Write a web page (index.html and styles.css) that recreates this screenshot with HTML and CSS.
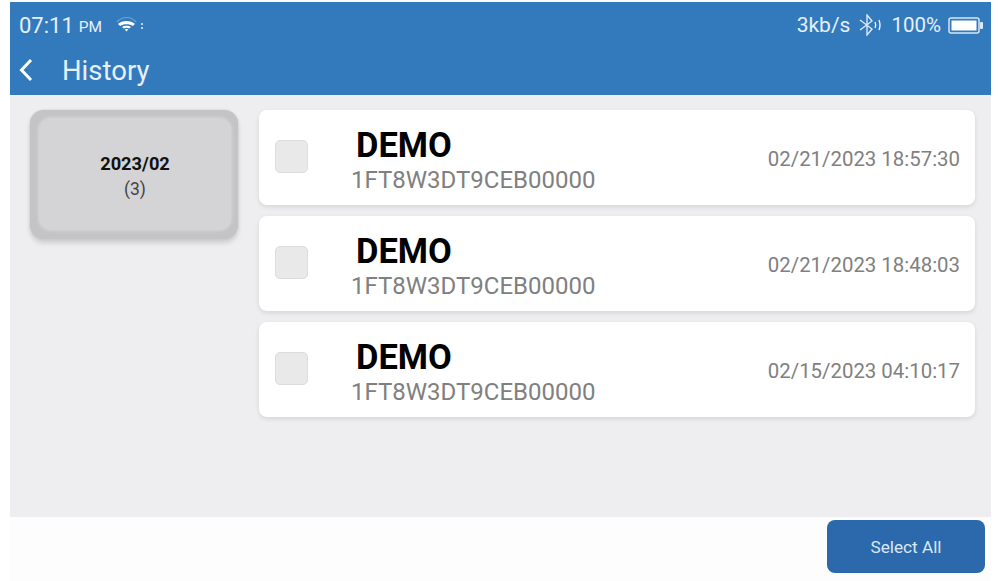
FILE: index.html
```html
<!DOCTYPE html>
<html>
<head>
  <meta name="viewport" content="width=device-width, initial-scale=1.0">
  <title>History</title>
  <link rel="stylesheet" href="styles.css">
</head>
<body>
  <div class="screen">
    <div class="header">
      <div class="status">
        <span class="time">07:11</span>
        <span class="ampm">PM</span>
        <svg class="wifi" width="28" height="18" viewBox="0 0 28 18">
          <path d="M1 6 C6 0 15 0 20 6" fill="none" stroke="#6fa3d6" stroke-width="1.2"/>
          <path d="M2 8 C6 4 15 4 19 8 L16.8 10 C13.8 7.6 7.2 7.6 4.2 10 Z" fill="#fff"/>
          <path d="M6 11 C8.4 9.4 12.6 9.4 15 11 L13.2 12.6 C11.6 11.6 9.4 11.6 7.8 12.6 Z" fill="#fff"/>
          <path d="M8.8 13.4 C9.8 12.8 11.2 12.8 12.2 13.4 L10.5 15.6 Z" fill="#fff"/>
          <circle cx="26" cy="8" r="1.1" fill="#d8e6f5"/>
          <circle cx="26" cy="12" r="1.1" fill="#d8e6f5"/>
        </svg>
        <span class="spacer"></span>
        <span class="speed">3kb/s</span>
        <svg class="bt" width="24" height="22" viewBox="0 0 24 22">
          <path d="M1 6 L13 15 L8 21 L8 1 L13 7 L1 16" fill="none" stroke="#dbe8f6" stroke-width="1.4"/>
          <path d="M16 8 Q17.5 11 16 14" fill="none" stroke="#fff" stroke-width="1.3"/>
          <path d="M20 6 Q22 11 20 16" fill="none" stroke="#fff" stroke-width="1.3"/>
        </svg>
        <span class="percent">100%</span>
        <svg class="battery" width="35" height="17" viewBox="0 0 35 17">
          <rect x="1" y="1" width="30" height="15" rx="2" fill="#337abd" stroke="#d5e4f4" stroke-width="1.5"/>
          <rect x="3.5" y="3.5" width="25" height="10" fill="#ffffff"/>
          <rect x="32" y="5" width="3" height="7" rx="1" fill="#dbe8f6"/>
        </svg>
      </div>
      <div class="title-row">
        <svg class="back" width="16" height="24" viewBox="0 0 16 24">
          <path d="M13 2 L3.5 12 L13 22" fill="none" stroke="#fff" stroke-width="3"/>
        </svg>
        <span class="title">History</span>
      </div>
    </div>

    <div class="content">
      <div class="month">
        <div class="month-inner">
          <b>2023/02</b>
          <span>(3)</span>
        </div>
      </div>
      <div class="list">
        <div class="row">
          <div class="check"></div>
          <div class="info">
            <div class="name">DEMO</div>
            <div class="vin">1FT8W3DT9CEB00000</div>
          </div>
          <div class="date">02/21/2023 18:57:30</div>
        </div>
        <div class="row">
          <div class="check"></div>
          <div class="info">
            <div class="name">DEMO</div>
            <div class="vin">1FT8W3DT9CEB00000</div>
          </div>
          <div class="date">02/21/2023 18:48:03</div>
        </div>
        <div class="row">
          <div class="check"></div>
          <div class="info">
            <div class="name">DEMO</div>
            <div class="vin">1FT8W3DT9CEB00000</div>
          </div>
          <div class="date">02/15/2023 04:10:17</div>
        </div>
      </div>
    </div>

    <div class="footer">
      <button class="select-all">Select All</button>
    </div>
  </div>
</body>
</html>
```

FILE: styles.css
```css
body {
  font-family: Roboto, sans-serif;
  margin: 0;
  padding: 0;
  background-color: #ffffff;
}

.screen {
  height: 579px;
  margin: 2px 7px 0 10px;
  display: flex;
  flex-direction: column;
  overflow: hidden;
}

.header {
  height: 93px;
  background-color: #337abd;
  color: #e6f0fa;
  flex-shrink: 0;
}

.status {
  display: flex;
  align-items: center;
  height: 46px;
  padding: 0 8px 0 9px;
}

.time {
  font-size: 22px;
}

.ampm {
  font-size: 15.5px;
  margin: 3px 0 0 5px;
}

.wifi {
  margin-left: 14px;
}

.spacer {
  flex: 1;
}

.speed {
  font-size: 21px;
}

.percent {
  font-size: 20.5px;
}

.bt {
  margin: 0 8px 0 9px;
}

.battery {
  margin-left: 7px;
}

.title-row {
  display: flex;
  align-items: center;
  height: 44px;
  padding-left: 8px;
}

.title {
  font-size: 27.5px;
  margin-left: 28px;
}

.content {
  flex: 1;
  background-color: #eeedef;
  display: flex;
  align-items: flex-start;
  padding: 15px 16px 0 20px;
}

.month {
  width: 208px;
  height: 129px;
  box-sizing: border-box;
  margin-right: 21px;
  background-color: #c4c4c6;
  border-radius: 14px;
  padding: 8px 7px 9px 9px;
  box-shadow: 0 0 2px #c4c4c6, 0 4px 5px rgba(0, 0, 0, 0.14);
  flex-shrink: 0;
}

.month-inner {
  height: 100%;
  background-color: #d4d3d6;
  border-radius: 12px;
  box-shadow: 0 0 3px 1px #d4d3d6;
  display: flex;
  flex-direction: column;
  align-items: center;
  justify-content: center;
  font-size: 18.3px;
  color: #111111;
  padding-top: 3px;
  box-sizing: border-box;
}

.month-inner span {
  font-size: 17.5px;
  color: #444444;
  margin-top: 5px;
}

.list {
  flex: 1;
  display: flex;
  flex-direction: column;
  gap: 11px;
}

.row {
  height: 95px;
  background-color: #ffffff;
  border-radius: 8px;
  box-shadow: 0 2px 5px rgba(0, 0, 0, 0.1);
  display: flex;
  align-items: center;
  padding: 0 15px 0 16px;
}

.check {
  width: 33px;
  height: 33px;
  box-sizing: border-box;
  background-color: #e9e9ea;
  border: 1px solid #dcdcdc;
  border-radius: 5px;
  margin-top: -2px;
}

.info {
  flex: 1;
  margin: 7px 0 0 43px;
}

.name {
  font-size: 34.5px;
  font-weight: 700;
  color: #000000;
  line-height: 36px;
  margin-left: 5px;
}

.vin {
  font-size: 24px;
  color: #808080;
  line-height: 30px;
  margin-top: 2px;
}

.date {
  font-size: 20.4px;
  color: #808080;
  margin-top: 3px;
}

.footer {
  height: 64px;
  background-color: #fdfdfd;
  display: flex;
  justify-content: flex-end;
  align-items: flex-start;
  flex-shrink: 0;
}

.select-all {
  width: 158px;
  height: 53px;
  margin-top: 3px;
  margin-right: 6px;
  background-color: #2b69ac;
  color: #dbe7f3;
  border: 0;
  border-radius: 8px;
  font-family: Roboto, sans-serif;
  font-size: 17.2px;
}
```
